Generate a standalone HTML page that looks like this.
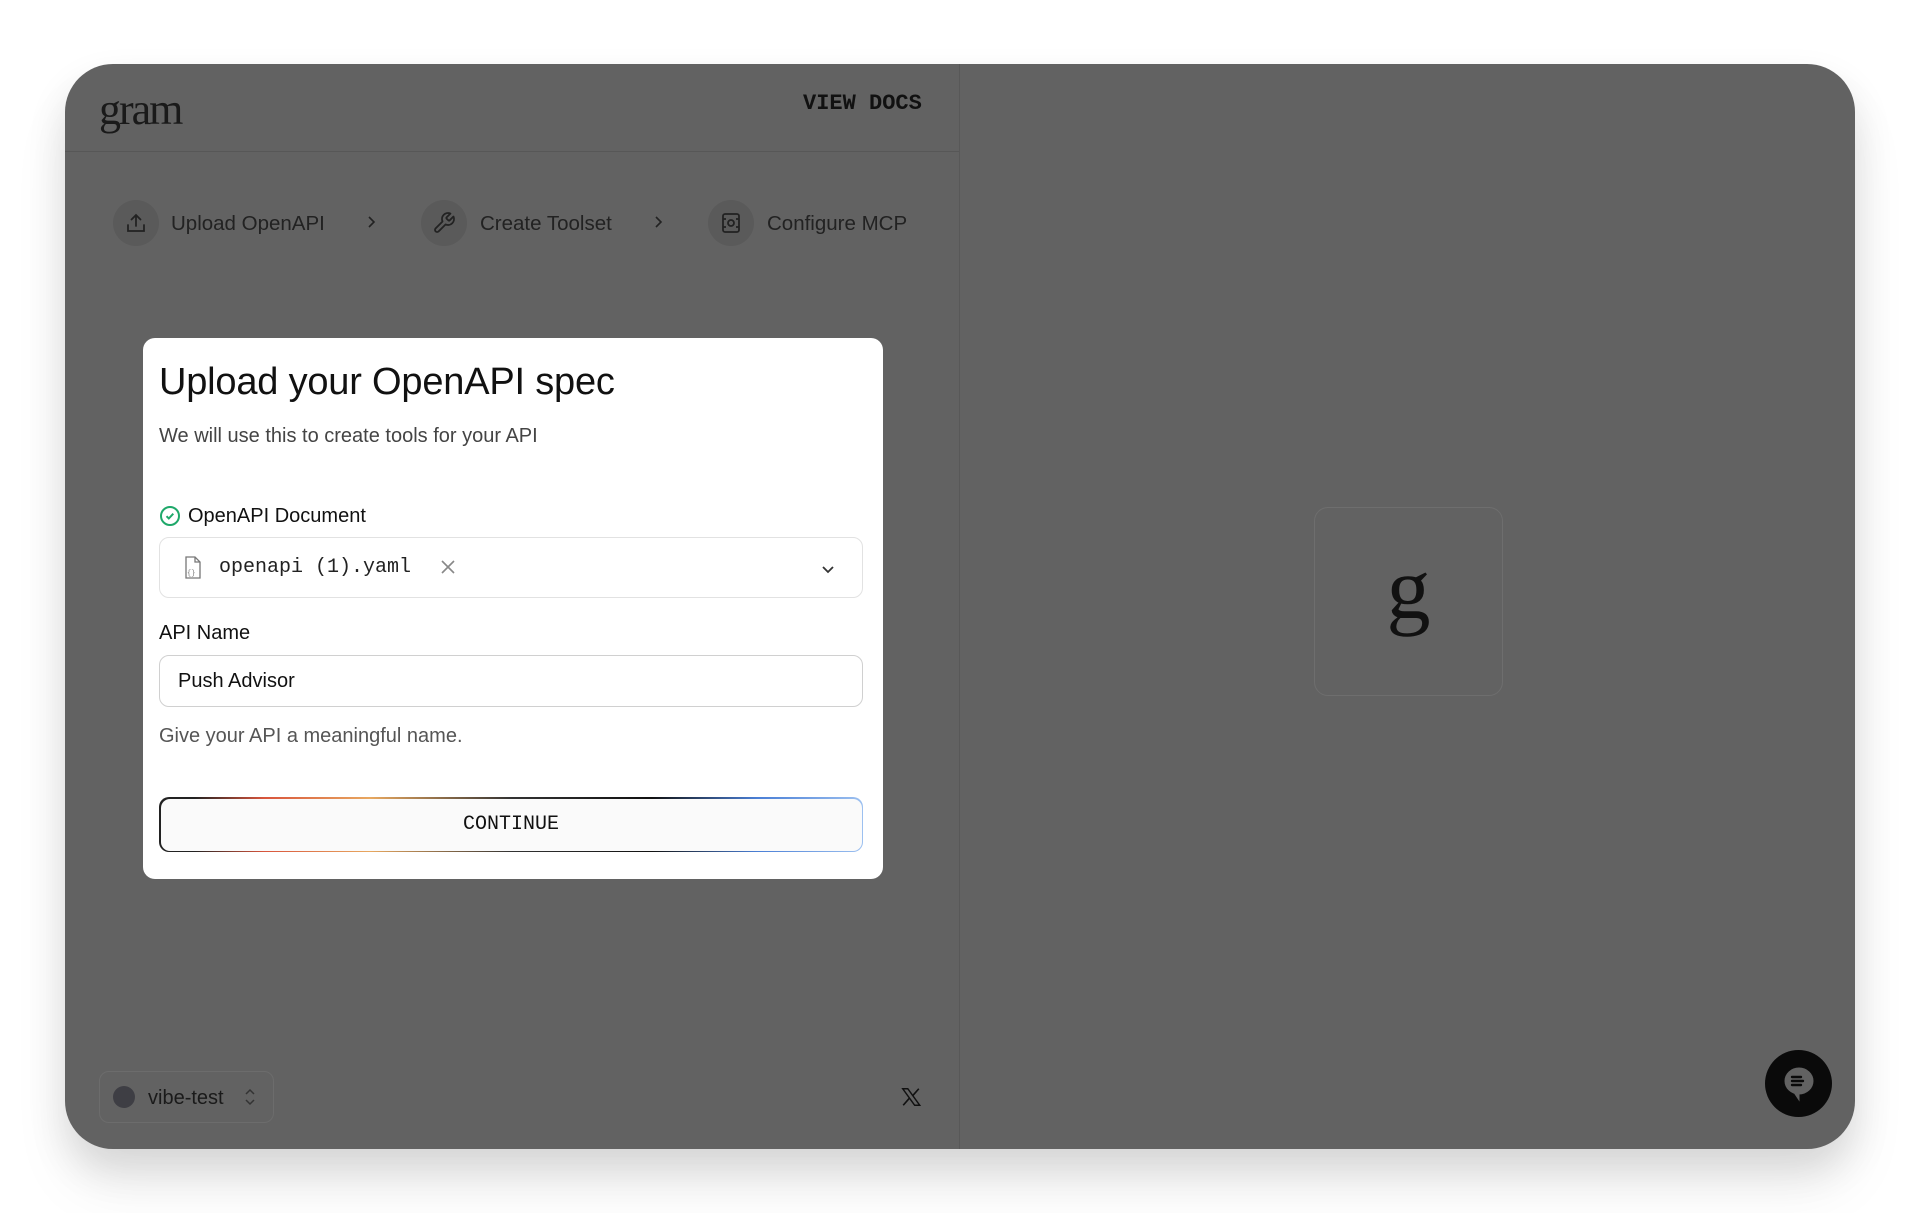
<!DOCTYPE html>
<html><head><meta charset="utf-8"><style>
*{box-sizing:border-box;margin:0;padding:0}
body{width:1920px;height:1213px;background:#fff;position:relative;overflow:hidden;font-family:"Liberation Sans",sans-serif;color:#1c1c1c}
.win{position:absolute;left:65px;top:64px;width:1790px;height:1085px;background:#626262;border-radius:48px;box-shadow:0 20px 40px rgba(0,0,0,.12),0 40px 60px rgba(0,0,0,.06);overflow:hidden}
.abs{position:absolute}
.mono{font-family:"Liberation Mono",monospace}
.circ{position:absolute;width:46px;height:46px;border-radius:50%;background:#5a5a5a;top:200px}
.step{position:absolute;top:212px;font-size:20.5px;color:#222}
.chev{position:absolute;top:212px}
.card{position:absolute;left:143px;top:338px;width:740px;height:541px;background:#fff;border-radius:12px}
</style></head><body>
<div class="win">
 <div class="abs" style="left:0;top:87px;width:894px;height:1px;background:#575757"></div>
 <div class="abs" style="left:894px;top:0;width:1px;height:1085px;background:#585858"></div>
 <div class="abs" style="left:34px;top:20px;font-family:'Liberation Serif',serif;font-size:44px;color:#1a1a1a;letter-spacing:-2px">gram</div>
 <div class="abs mono" style="left:738px;top:27px;font-size:22px;font-weight:bold;color:#111">VIEW DOCS</div>
</div>
<!-- steps -->
<div class="circ" style="left:113px"></div>
<svg class="abs" style="left:124px;top:211px" width="24" height="24" viewBox="0 0 24 24" fill="none" stroke="#222" stroke-width="1.8" stroke-linecap="round"><path d="M12 15V4M7.5 8.5 12 4l4.5 4.5M4 14v6h16v-6"/></svg>
<div class="step" style="left:171px">Upload OpenAPI</div>
<svg class="chev" style="left:365px" width="14" height="20" viewBox="0 0 14 20" fill="none" stroke="#222" stroke-width="1.6"><path d="M4 5l5 5-5 5"/></svg>
<div class="circ" style="left:421px"></div>
<svg class="abs" style="left:432px;top:211px" width="24" height="24" viewBox="0 0 24 24" fill="none" stroke="#222" stroke-width="1.8" stroke-linejoin="round"><path d="M14.7 6.3a1 1 0 0 0 0 1.4l1.6 1.6a1 1 0 0 0 1.4 0l3.77-3.77a6 6 0 0 1-7.94 7.94l-6.91 6.91a2.12 2.12 0 0 1-3-3l6.91-6.91a6 6 0 0 1 7.94-7.94z"/></svg>
<div class="step" style="left:480px">Create Toolset</div>
<svg class="chev" style="left:652px" width="14" height="20" viewBox="0 0 14 20" fill="none" stroke="#222" stroke-width="1.6"><path d="M4 5l5 5-5 5"/></svg>
<div class="circ" style="left:708px"></div>
<svg class="abs" style="left:719px;top:211px" width="24" height="24" viewBox="0 0 24 24" fill="none" stroke="#222" stroke-width="1.8"><rect x="4" y="3" width="16" height="18" rx="2"/><circle cx="12" cy="12" r="3"/><path d="M4 8h3M4 16h3M17 8h3M17 16h3"/></svg>
<div class="step" style="left:767px">Configure MCP</div>

<div class="card">
 <div class="abs" style="left:16px;top:23px;font-size:38px;color:#111;letter-spacing:-0.2px">Upload your OpenAPI spec</div>
 <div class="abs" style="left:16px;top:87px;font-size:20px;color:#444">We will use this to create tools for your API</div>
 <svg class="abs" style="left:16px;top:167px" width="22" height="22" viewBox="0 0 22 22" fill="none" stroke="#1fa86a" stroke-width="2"><circle cx="11" cy="11" r="9"/><path d="M7.5 11.2l2.3 2.3 4.5-4.8"/></svg>
 <div class="abs" style="left:45px;top:167px;font-size:20px;color:#111">OpenAPI Document</div>
 <div class="abs" style="left:16px;top:199px;width:704px;height:61px;border:1px solid #e2e2e2;border-radius:10px"></div>
 <svg class="abs" style="left:40px;top:218px" width="20" height="24" viewBox="0 0 20 24" fill="none" stroke="#777" stroke-width="1.3"><path d="M3 1h9l5 5v16H3z"/><path d="M12 1v5h5"/><text x="4" y="19" font-size="7" fill="#777" stroke="none" font-family="Liberation Mono">{}</text></svg>
 <div class="abs mono" style="left:76px;top:218px;font-size:20px;color:#222">openapi (1).yaml</div>
 <svg class="abs" style="left:296px;top:220px" width="18" height="18" viewBox="0 0 18 18" stroke="#888" stroke-width="1.6"><path d="M3 3l12 12M15 3L3 15"/></svg>
 <svg class="abs" style="left:676px;top:222px" width="18" height="18" viewBox="0 0 18 18" fill="none" stroke="#333" stroke-width="1.8"><path d="M4 7l5 5 5-5"/></svg>
 <div class="abs" style="left:16px;top:284px;font-size:20px;color:#111">API Name</div>
 <div class="abs" style="left:16px;top:317px;width:704px;height:52px;border:1.5px solid #d0d0d0;border-radius:10px"></div>
 <div class="abs" style="left:35px;top:332px;font-size:20px;color:#111">Push Advisor</div>
 <div class="abs" style="left:16px;top:387px;font-size:20px;color:#555">Give your API a meaningful name.</div>
 <div class="abs" style="left:16px;top:459px;width:704px;height:55px;border-radius:10px;padding:1.5px;background:linear-gradient(90deg,#222 5%,#d9553c 15%,#e8a860 30%,#333 50%,#111 70%,#4a7fd6 85%,#9cc0f0 100%)"><div style="width:100%;height:100%;background:#fafafa;border-radius:9px;text-align:center;line-height:52px;font-family:'Liberation Mono',monospace;font-size:20px;color:#111">CONTINUE</div></div>
</div>

<div class="abs" style="left:1314px;top:507px;width:189px;height:189px;border:1px solid #6e6e6e;border-radius:14px"></div>
<div class="abs" style="left:1314px;top:530px;width:189px;text-align:center;font-family:'Liberation Serif',serif;font-size:88px;color:#111;line-height:120px">g</div>

<div class="abs" style="left:99px;top:1071px;width:175px;height:52px;border:1px solid #6c6c6c;border-radius:10px"></div>
<div class="abs" style="left:113px;top:1086px;width:22px;height:22px;border-radius:50%;background:#3e3e44"></div>
<div class="abs" style="left:148px;top:1087px;font-size:20px;color:#1a1a1a">vibe-test</div>
<svg class="abs" style="left:242px;top:1085px" width="16" height="24" viewBox="0 0 16 24" fill="none" stroke="#333" stroke-width="1.5"><path d="M4 9l4-4 4 4M4 15l4 4 4-4"/></svg>
<svg class="abs" style="left:900px;top:1086px" width="22" height="22" viewBox="0 0 24 24"><path d="M3 3h5.5l13 18H16z" fill="none" stroke="#111" stroke-width="1.6"/><path d="M20.5 3L13.5 11M3.5 21l7-8" stroke="#111" stroke-width="1.8"/></svg>
<div class="abs" style="left:1765px;top:1050px;width:67px;height:67px;border-radius:50%;background:#0a0a0a"></div>
<svg class="abs" style="left:1780px;top:1064px" width="38" height="40" viewBox="0 0 38 40"><path d="M19 4a14 13 0 1 0 0 26h-4l4 6v-6a14 13 0 0 0 0-26z" fill="#626262" stroke="#626262"/><path d="M12 13h9M12 17h11M12 21h9" stroke="#0a0a0a" stroke-width="2.4" stroke-linecap="round"/></svg>
</body></html>
